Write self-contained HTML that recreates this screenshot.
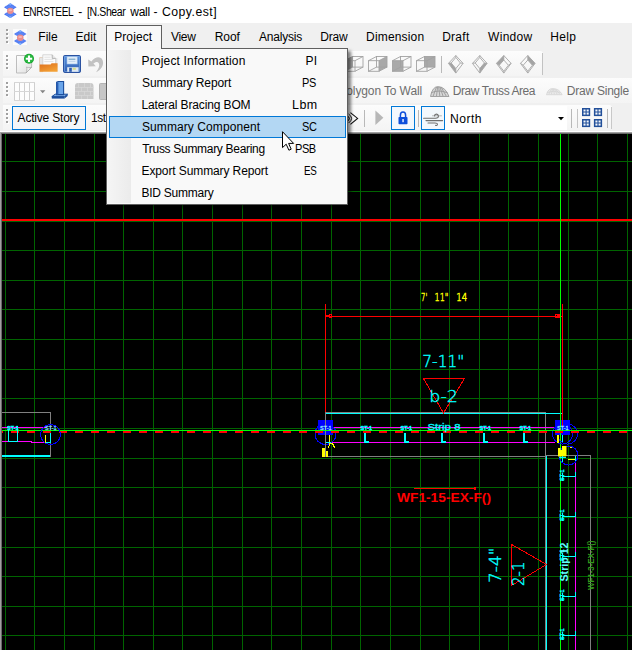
<!DOCTYPE html>
<html lang="en"><head><meta charset="utf-8"><title>ENRSTEEL - [N.Shear wall - Copy.est]</title>
<style>
html,body{margin:0;padding:0;background:#f0f0f0;}
body{width:632px;height:650px;position:relative;overflow:hidden;font-family:"Liberation Sans",sans-serif;font-size:12px;}
.t{position:absolute;white-space:nowrap;line-height:16px;height:16px;}
.b{position:absolute;}
svg{position:absolute;overflow:visible;}
</style></head><body>
<header class="titlebar">
<div class="b" style="left:0px;top:0px;width:632px;height:23px;background:#ffffff;"></div>
<svg style="left:3.7px;top:3.2px" width="12.6" height="15.3" viewBox="0 0 12.6 15.3"><polygon points="6.3,0.31 12.6,4.13 6.3,7.96 0,4.13" fill="#3f6df0"/><polygon points="6.3,0.31 8.1,1.31 6.3,2.31 4.5,1.31" fill="#7db4ff"/><polygon points="6.3,7.34 12.6,11.17 6.3,14.99 0,11.17" fill="#3f6df0"/><polygon points="6.3,14.99 8.1,13.99 6.3,12.99 4.5,13.99" fill="#7db4ff"/><path d="M3.15 2.22 L9.45 6.04 M9.45 2.22 L3.15 6.04 M1.58 3.17 L7.88 7.00 M4.72 1.26 L11.02 5.09 M11.02 3.17 L4.72 7.00 M7.88 1.26 L1.58 5.09" stroke="#7ea2fa" stroke-width="0.45" fill="none"/><path d="M3.15 9.26 L9.45 13.08 M9.45 9.26 L3.15 13.08 M1.58 10.21 L7.88 14.04 M4.72 8.30 L11.02 12.13 M11.02 10.21 L4.72 14.04 M7.88 8.30 L1.58 12.13" stroke="#7ea2fa" stroke-width="0.45" fill="none"/><ellipse cx="6.3" cy="7.85" rx="3.3" ry="3.2" fill="#ea8d8d"/><ellipse cx="6.3" cy="7.25" rx="2" ry="1" fill="#f5b5b5"/></svg>
<span class="t " style="left:23.06px;top:4.00px;font-size:12px;color:#000;letter-spacing:-0.450px;transform:scaleX(0.8412);transform-origin:0 0;">ENRSTEEL</span>
<span class="t " style="left:78.30px;top:4.00px;font-size:12px;color:#000;">-</span>
<span class="t " style="left:86.63px;top:4.00px;font-size:12px;color:#000;letter-spacing:-0.450px;transform:scaleX(0.8768);transform-origin:0 0;">[N.Shear</span>
<span class="t " style="left:130.30px;top:4.00px;font-size:12px;color:#000;letter-spacing:-0.292px;">wall</span>
<span class="t " style="left:153.50px;top:4.00px;font-size:12px;color:#000;">-</span>
<span class="t " style="left:161.96px;top:4.00px;font-size:12px;color:#000;letter-spacing:0.450px;transform:scaleX(1.0216);transform-origin:0 0;">Copy.est]</span>
</header>
<nav class="menubar">
<div class="b" style="left:0px;top:23px;width:632px;height:27px;background:#f0f0f0;"></div>
<div class="b" style="left:7px;top:30px;width:2px;height:2px;background:#ffffff;"></div>
<div class="b" style="left:6px;top:29px;width:2px;height:2px;background:#a0a0a0;"></div>
<div class="b" style="left:7px;top:34px;width:2px;height:2px;background:#ffffff;"></div>
<div class="b" style="left:6px;top:33px;width:2px;height:2px;background:#a0a0a0;"></div>
<div class="b" style="left:7px;top:38px;width:2px;height:2px;background:#ffffff;"></div>
<div class="b" style="left:6px;top:37px;width:2px;height:2px;background:#a0a0a0;"></div>
<div class="b" style="left:7px;top:42px;width:2px;height:2px;background:#ffffff;"></div>
<div class="b" style="left:6px;top:41px;width:2px;height:2px;background:#a0a0a0;"></div>
<div class="b" style="left:13px;top:29px;width:14px;height:16px;background:#fbfbfb;"></div>
<svg style="left:13.8px;top:29.6px" width="12.5" height="15" viewBox="0 0 12.5 15"><polygon points="6.25,0.30 12.5,4.05 6.25,7.80 0,4.05" fill="#3f6df0"/><polygon points="6.25,0.30 8.05,1.30 6.25,2.30 4.45,1.30" fill="#7db4ff"/><polygon points="6.25,7.20 12.5,10.95 6.25,14.70 0,10.95" fill="#3f6df0"/><polygon points="6.25,14.70 8.05,13.70 6.25,12.70 4.45,13.70" fill="#7db4ff"/><path d="M3.12 2.18 L9.38 5.93 M9.38 2.18 L3.12 5.93 M1.56 3.11 L7.81 6.86 M4.69 1.24 L10.94 4.99 M10.94 3.11 L4.69 6.86 M7.81 1.24 L1.56 4.99" stroke="#7ea2fa" stroke-width="0.45" fill="none"/><path d="M3.12 9.07 L9.38 12.82 M9.38 9.07 L3.12 12.82 M1.56 10.01 L7.81 13.76 M4.69 8.14 L10.94 11.89 M10.94 10.01 L4.69 13.76 M7.81 8.14 L1.56 11.89" stroke="#7ea2fa" stroke-width="0.45" fill="none"/><ellipse cx="6.25" cy="7.70" rx="3.3" ry="3.2" fill="#ea8d8d"/><ellipse cx="6.25" cy="7.10" rx="2" ry="1" fill="#f5b5b5"/></svg>
<div class="b" style="left:106px;top:25px;width:56px;height:25px;background:#f8f8f8;border:1px solid #5f5f5f;border-bottom:none;box-sizing:border-box;"></div>
<span class="t " style="left:38.30px;top:29.00px;font-size:12px;color:#000;letter-spacing:0.017px;">File</span>
<span class="t " style="left:75.50px;top:29.00px;font-size:12px;color:#000;letter-spacing:0.025px;">Edit</span>
<span class="t " style="left:114.20px;top:29.00px;font-size:12px;color:#000;letter-spacing:0.092px;">Project</span>
<span class="t " style="left:171.00px;top:29.00px;font-size:12px;color:#000;letter-spacing:-0.292px;">View</span>
<span class="t " style="left:214.70px;top:29.00px;font-size:12px;color:#000;letter-spacing:-0.058px;">Roof</span>
<span class="t " style="left:259.10px;top:29.00px;font-size:12px;color:#000;letter-spacing:-0.236px;">Analysis</span>
<span class="t " style="left:320.30px;top:29.00px;font-size:12px;color:#000;letter-spacing:-0.208px;">Draw</span>
<span class="t " style="left:366.10px;top:29.00px;font-size:12px;color:#000;letter-spacing:0.166px;">Dimension</span>
<span class="t " style="left:442.20px;top:29.00px;font-size:12px;color:#000;letter-spacing:0.256px;">Draft</span>
<span class="t " style="left:488.10px;top:29.00px;font-size:12px;color:#000;letter-spacing:0.270px;">Window</span>
<span class="t " style="left:550.30px;top:29.00px;font-size:12px;color:#000;letter-spacing:0.283px;">Help</span>
</nav>
<section class="toolbars">
<div class="b" style="left:3px;top:51px;width:540px;height:25px;background:linear-gradient(#fcfcfc,#f4f4f4);border-radius:0 3px 3px 0;"></div>
<div class="b" style="left:542px;top:53px;width:1px;height:22px;background:#c2c2c2;"></div>
<div class="b" style="left:3px;top:78px;width:629px;height:25px;background:linear-gradient(#fcfcfc,#f4f4f4);"></div>
<div class="b" style="left:3px;top:105px;width:609px;height:25px;background:linear-gradient(#fcfcfc,#f4f4f4);border-radius:0 3px 3px 0;"></div>
<div class="b" style="left:611px;top:107px;width:1px;height:22px;background:#c8c8c8;"></div>
<div class="b" style="left:7px;top:56px;width:2px;height:2px;background:#ffffff;"></div>
<div class="b" style="left:6px;top:55px;width:2px;height:2px;background:#a0a0a0;"></div>
<div class="b" style="left:7px;top:60px;width:2px;height:2px;background:#ffffff;"></div>
<div class="b" style="left:6px;top:59px;width:2px;height:2px;background:#a0a0a0;"></div>
<div class="b" style="left:7px;top:64px;width:2px;height:2px;background:#ffffff;"></div>
<div class="b" style="left:6px;top:63px;width:2px;height:2px;background:#a0a0a0;"></div>
<div class="b" style="left:7px;top:68px;width:2px;height:2px;background:#ffffff;"></div>
<div class="b" style="left:6px;top:67px;width:2px;height:2px;background:#a0a0a0;"></div>
<div class="b" style="left:7px;top:83px;width:2px;height:2px;background:#ffffff;"></div>
<div class="b" style="left:6px;top:82px;width:2px;height:2px;background:#a0a0a0;"></div>
<div class="b" style="left:7px;top:87px;width:2px;height:2px;background:#ffffff;"></div>
<div class="b" style="left:6px;top:86px;width:2px;height:2px;background:#a0a0a0;"></div>
<div class="b" style="left:7px;top:91px;width:2px;height:2px;background:#ffffff;"></div>
<div class="b" style="left:6px;top:90px;width:2px;height:2px;background:#a0a0a0;"></div>
<div class="b" style="left:7px;top:95px;width:2px;height:2px;background:#ffffff;"></div>
<div class="b" style="left:6px;top:94px;width:2px;height:2px;background:#a0a0a0;"></div>
<div class="b" style="left:7px;top:110px;width:2px;height:2px;background:#ffffff;"></div>
<div class="b" style="left:6px;top:109px;width:2px;height:2px;background:#a0a0a0;"></div>
<div class="b" style="left:7px;top:114px;width:2px;height:2px;background:#ffffff;"></div>
<div class="b" style="left:6px;top:113px;width:2px;height:2px;background:#a0a0a0;"></div>
<div class="b" style="left:7px;top:118px;width:2px;height:2px;background:#ffffff;"></div>
<div class="b" style="left:6px;top:117px;width:2px;height:2px;background:#a0a0a0;"></div>
<div class="b" style="left:7px;top:122px;width:2px;height:2px;background:#ffffff;"></div>
<div class="b" style="left:6px;top:121px;width:2px;height:2px;background:#a0a0a0;"></div>
<svg style="left:15px;top:54px" width="20" height="20" viewBox="0 0 20 20" >
<defs><linearGradient id="pg" x1="0" y1="0" x2="1" y2="1"><stop offset="0" stop-color="#ffffff"/><stop offset="1" stop-color="#dedede"/></linearGradient></defs>
<path d="M1.5 1.5 H16.6 V13.4 L11 19 H1.5 Z" fill="url(#pg)" stroke="#bdbdbd" stroke-width="1"/>
<path d="M16.6 13.2 C14.5 14.2 12.8 13.6 11.6 13 C12.2 15 12 17 11 19 Z" fill="#f6f6f6" stroke="#a9a9a9" stroke-width="0.8"/>
<circle cx="14" cy="4.8" r="5" fill="#1aa32f"/>
<circle cx="14" cy="4.8" r="4.3" fill="#27b83f"/>
<path d="M14 1.6 V8 M10.8 4.8 H17.2" stroke="#fff" stroke-width="2.1"/>
</svg>
<svg style="left:39px;top:54px" width="20" height="19" viewBox="0 0 20 19" >
<defs><linearGradient id="fo" x1="0" y1="0" x2="0.6" y2="1"><stop offset="0" stop-color="#de6f1d"/><stop offset="1" stop-color="#f3a136"/></linearGradient></defs>
<path d="M0.6 3.6 H4 V17.6 H0.6 Z" fill="#e9e4de" stroke="#d9b08a" stroke-width="0.5"/>
<path d="M1 4 H18.4 V17 H1 Z" fill="#e6e6e6"/>
<path d="M3.8 0.8 H13.2 L16.6 4.4 V12 H3.8 Z" fill="#fcfcfc" stroke="#cdcdcd" stroke-width="0.8"/>
<path d="M13.2 0.8 V4.4 H16.6" fill="#e9e9e9" stroke="#9a9a9a" stroke-width="0.7"/>
<path d="M5.4 3.2 H11.6 M5.4 5.4 H14.4 M5.4 7.6 H14.4" stroke="#dedede" stroke-width="0.9"/>
<path d="M0.7 10.4 L11.6 10.4 L12.6 9.2 H18.6 V17.8 H0.7 Z" fill="url(#fo)"/>
</svg>
<svg style="left:63px;top:55px" width="18" height="18" viewBox="0 0 18 18" >
<defs><linearGradient id="fl" x1="0" y1="0" x2="0" y2="1"><stop offset="0" stop-color="#5b93de"/><stop offset="1" stop-color="#2f5db0"/></linearGradient></defs>
<rect x="0.5" y="0.5" width="17" height="17" rx="1.2" fill="url(#fl)" stroke="#2b52a0"/>
<rect x="1.5" y="1.5" width="15" height="15" rx="0.6" fill="none" stroke="#7fb0ea" stroke-width="0.7" opacity="0.8"/>
<rect x="4" y="1.8" width="10.2" height="7.2" fill="#e6f0fa" stroke="#9fc0e6" stroke-width="0.6"/>
<path d="M5.6 4.2 H12.4" stroke="#3f83b0" stroke-width="0.8"/><path d="M5.6 6.4 H12.4" stroke="#b7cde6" stroke-width="0.8"/>
<rect x="4.2" y="12.2" width="11.4" height="4.6" fill="#dfe9f3"/>
<rect x="6.2" y="12.8" width="2.6" height="4" fill="#2f5caf"/>
<rect x="9.6" y="12.8" width="3.2" height="2" fill="#d5dd8a"/>
</svg>
<svg style="left:87px;top:55px" width="18" height="19" viewBox="0 0 18 19" >
<path d="M1.2 4.4 L1.4 11.6 L8.8 11.2 L6.4 8.6 C8.4 6.8 10.8 6.4 11.8 8.2 C13 10.4 11.6 14 9 17.2 C14.4 14.6 17.4 9.6 15.6 5.2 C13.8 1 8.4 1.4 4.4 6.4 Z" fill="#c2c2c2"/>
</svg>
<svg style="left:14px;top:82px" width="21" height="19" viewBox="0 0 21 19" ><rect x="0" y="0" width="21" height="19" fill="#fdfdfd"/><rect x="0" y="0" width="1" height="19" fill="#cfcfcf"/><rect x="5" y="0" width="1" height="19" fill="#cfcfcf"/><rect x="10" y="0" width="1" height="19" fill="#cfcfcf"/><rect x="15" y="0" width="1" height="19" fill="#cfcfcf"/><rect x="20" y="0" width="1" height="19" fill="#cfcfcf"/><rect x="0" y="0" width="21" height="1" fill="#d6d6d6"/><rect x="0" y="9" width="21" height="1" fill="#d6d6d6"/><rect x="0" y="18" width="21" height="1" fill="#d6d6d6"/></svg>
<svg style="left:40px;top:90px" width="6" height="4" viewBox="0 0 6 4" ><path d="M0 0.3 H5.4 L2.7 3.2 Z" fill="#858585"/></svg>
<svg style="left:51px;top:81px" width="18" height="19" viewBox="0 0 18 19" >
<path d="M0.8 15.6 L4.2 13.2 H16.6 L13.6 15.6 Z" fill="#7fb0ea" stroke="#1b4d9c" stroke-width="1"/>
<path d="M0.8 15.6 H13.6 V17.6 H0.8 Z" fill="#1b4d9c"/>
<path d="M13.6 15.6 L16.6 13.2 V15 L13.6 17.6 Z" fill="#1b4d9c"/>
<path d="M5.6 1.2 L7.2 0.5 H12.6 V13.6 H5.6 Z" fill="#6aa5ea" stroke="#1b4d9c" stroke-width="1.1"/>
<path d="M5.6 1.4 H7.4 V13.6 H5.6Z" fill="#2a5fb4"/>
</svg>
<svg style="left:75px;top:82.5px" width="19" height="16" viewBox="0 0 19 16" ><path d="M0 3 Q0 0 3 0 H15.5 Q18.5 0 18.5 3 V16 H0 Z" fill="#c9c9c9"/><rect x="0" y="4" width="18.5" height="0.7" fill="#d9d9d9"/><rect x="0" y="8" width="18.5" height="0.7" fill="#d9d9d9"/><rect x="0" y="12" width="18.5" height="0.7" fill="#d9d9d9"/><rect x="3" y="0" width="0.7" height="4" fill="#d9d9d9"/><rect x="9" y="0" width="0.7" height="4" fill="#d9d9d9"/><rect x="15" y="0" width="0.7" height="4" fill="#d9d9d9"/><rect x="6" y="4" width="0.7" height="4" fill="#d9d9d9"/><rect x="12" y="4" width="0.7" height="4" fill="#d9d9d9"/><rect x="3" y="8" width="0.7" height="4" fill="#d9d9d9"/><rect x="9" y="8" width="0.7" height="4" fill="#d9d9d9"/><rect x="15" y="8" width="0.7" height="4" fill="#d9d9d9"/><rect x="6" y="12" width="0.7" height="4" fill="#d9d9d9"/><rect x="12" y="12" width="0.7" height="4" fill="#d9d9d9"/></svg>
<svg style="left:99px;top:82.5px" width="8" height="17" viewBox="0 0 8 17" ><rect x="0.5" y="0.5" width="10" height="16" rx="1" fill="#c6c6c6" stroke="#b4b4b4"/></svg>
<svg style="left:344px;top:55.6px" width="19.5" height="15.8" viewBox="0 0 19.5 15.8" ><polygon points="0.5,4.7 8.5,0.5 8.5,11.1 0.5,15.3" fill="#a9a9a9"/><g fill="none" stroke="#a2a2a2" stroke-width="0.9"><rect x="0.5" y="4.7" width="10.5" height="10.600000000000001"/><rect x="8.5" y="0.5" width="10.5" height="10.6"/><path d="M0.5 4.7 L8.5 0.5 M11.0 4.7 L19.0 0.5 M0.5 15.3 L8.5 11.1 M11.0 15.3 L19.0 11.1"/></g></svg>
<svg style="left:368.3px;top:55.6px" width="19.5" height="15.8" viewBox="0 0 19.5 15.8" ><polygon points="11.0,4.7 19.0,0.5 19.0,11.1 11.0,15.3" fill="#a9a9a9"/><g fill="none" stroke="#a2a2a2" stroke-width="0.9"><rect x="0.5" y="4.7" width="10.5" height="10.600000000000001"/><rect x="8.5" y="0.5" width="10.5" height="10.6"/><path d="M0.5 4.7 L8.5 0.5 M11.0 4.7 L19.0 0.5 M0.5 15.3 L8.5 11.1 M11.0 15.3 L19.0 11.1"/></g></svg>
<svg style="left:392.3px;top:55.6px" width="19.5" height="15.8" viewBox="0 0 19.5 15.8" ><polygon points="0.5,4.7 11.0,4.7 11.0,15.3 0.5,15.3" fill="#a9a9a9"/><g fill="none" stroke="#a2a2a2" stroke-width="0.9"><rect x="0.5" y="4.7" width="10.5" height="10.600000000000001"/><rect x="8.5" y="0.5" width="10.5" height="10.6"/><path d="M0.5 4.7 L8.5 0.5 M11.0 4.7 L19.0 0.5 M0.5 15.3 L8.5 11.1 M11.0 15.3 L19.0 11.1"/></g></svg>
<svg style="left:416.2px;top:55.6px" width="19.5" height="15.8" viewBox="0 0 19.5 15.8" ><polygon points="8.5,0.5 19.0,0.5 19.0,11.1 8.5,11.1" fill="#a9a9a9"/><g fill="none" stroke="#a2a2a2" stroke-width="0.9"><rect x="0.5" y="4.7" width="10.5" height="10.600000000000001"/><rect x="8.5" y="0.5" width="10.5" height="10.6"/><path d="M0.5 4.7 L8.5 0.5 M11.0 4.7 L19.0 0.5 M0.5 15.3 L8.5 11.1 M11.0 15.3 L19.0 11.1"/></g></svg>
<div class="b" style="left:441px;top:56px;width:1px;height:17px;background:#b9b9b9;"></div>
<svg style="left:448.2px;top:54.6px" width="15.6" height="18.6" viewBox="0 0 15.6 18.6" ><polygon points="0.50,8.37 3.20,8.00 7.80,13.58 7.80,18.10" fill="#a4a4a4"/><g fill="none" stroke="#a6a6a6" stroke-width="0.9"><polygon points="7.80,0.50 15.10,8.37 7.80,18.10 0.50,8.37"/><polygon points="7.80,2.42 12.40,8.00 7.80,13.58 3.20,8.00"/><path d="M7.8 0.5 L7.8 2.418 M15.1 8.370000000000001 L12.399999999999999 7.998 M7.8 18.1 L7.8 13.578000000000001 M0.5 8.370000000000001 L3.2 7.998"/></g></svg>
<svg style="left:472.2px;top:54.6px" width="15.6" height="18.6" viewBox="0 0 15.6 18.6" ><polygon points="15.10,8.37 12.40,8.00 7.80,13.58 7.80,18.10" fill="#a4a4a4"/><g fill="none" stroke="#a6a6a6" stroke-width="0.9"><polygon points="7.80,0.50 15.10,8.37 7.80,18.10 0.50,8.37"/><polygon points="7.80,2.42 12.40,8.00 7.80,13.58 3.20,8.00"/><path d="M7.8 0.5 L7.8 2.418 M15.1 8.370000000000001 L12.399999999999999 7.998 M7.8 18.1 L7.8 13.578000000000001 M0.5 8.370000000000001 L3.2 7.998"/></g></svg>
<svg style="left:496.4px;top:54.6px" width="15.6" height="18.6" viewBox="0 0 15.6 18.6" ><polygon points="7.80,0.50 0.50,8.37 3.20,10.23 7.80,5.02" fill="#a4a4a4"/><g fill="none" stroke="#a6a6a6" stroke-width="0.9"><polygon points="7.80,0.50 15.10,8.37 7.80,18.10 0.50,8.37"/><polygon points="7.80,5.02 12.40,10.23 7.80,16.18 3.20,10.23"/><path d="M7.8 0.5 L7.8 5.022000000000001 M15.1 8.370000000000001 L12.399999999999999 10.230000000000002 M7.8 18.1 L7.8 16.182000000000002 M0.5 8.370000000000001 L3.2 10.230000000000002"/></g></svg>
<svg style="left:520.3px;top:54.6px" width="15.6" height="18.6" viewBox="0 0 15.6 18.6" ><polygon points="7.80,0.50 15.10,8.37 12.40,10.23 7.80,5.02" fill="#a4a4a4"/><g fill="none" stroke="#a6a6a6" stroke-width="0.9"><polygon points="7.80,0.50 15.10,8.37 7.80,18.10 0.50,8.37"/><polygon points="7.80,5.02 12.40,10.23 7.80,16.18 3.20,10.23"/><path d="M7.8 0.5 L7.8 5.022000000000001 M15.1 8.370000000000001 L12.399999999999999 10.230000000000002 M7.8 18.1 L7.8 16.182000000000002 M0.5 8.370000000000001 L3.2 10.230000000000002"/></g></svg>
<span class="t " style="left:346.30px;top:83.00px;font-size:12px;color:#6d6d6d;letter-spacing:-0.117px;">olygon To Wall</span>
<svg style="left:430.2px;top:86px" width="19.5" height="11" viewBox="0 0 19.5 11" ><g fill="none" stroke="#9a9a9a" stroke-width="0.9" opacity="1"><path d="M0.5 10.5 Q2.34 0.55 8.19 0.6 Q15.600000000000001 1.1 19.0 10.5" fill="#9a9a9a" fill-opacity="0.35"/><path d="M3.2 10 L6.5 1"/><path d="M6.5 10 L7.6 1"/><path d="M9.8 10 L8.7 1"/><path d="M13.0 10 L9.9 1"/><path d="M16.2 10 L11.0 1"/><path d="M1 6.82 Q8.775 3.3 17.5 6.82"/><path d="M0.5 10.5 H19.0"/></g></svg>
<span class="t " style="left:452.80px;top:83.00px;font-size:12px;color:#6d6d6d;letter-spacing:-0.425px;">Draw Truss Area</span>
<svg style="left:546px;top:87.6px" width="16.6" height="7.2" viewBox="0 0 16.6 7.2" ><g fill="none" stroke="#cfcfcf" stroke-width="0.9" opacity="0.8"><path d="M0.5 6.7 Q1.992 0.36000000000000004 6.972 0.6 Q13.280000000000001 0.7200000000000001 16.1 6.7" fill="#cfcfcf" fill-opacity="0.35"/><path d="M2.8 6.2 L5.5 1"/><path d="M5.5 6.2 L6.5 1"/><path d="M8.3 6.2 L7.4 1"/><path d="M11.1 6.2 L8.4 1"/><path d="M13.8 6.2 L9.4 1"/><path d="M1 4.464 Q7.470000000000001 2.16 14.600000000000001 4.464"/><path d="M0.5 6.7 H16.1"/></g></svg>
<span class="t " style="left:566.80px;top:83.00px;font-size:12px;color:#6d6d6d;letter-spacing:-0.233px;">Draw Single</span>
<div class="b" style="left:12px;top:106px;width:74px;height:24px;background:#f4f6f9;border:1px solid #0078d7;box-sizing:border-box;"></div>
<span class="t " style="left:17.60px;top:110.00px;font-size:12px;color:#000;letter-spacing:-0.200px;">Active Story</span>
<span class="t " style="left:90.93px;top:110.00px;font-size:12px;color:#000;letter-spacing:-0.450px;transform:scaleX(0.9929);transform-origin:0 0;">1st</span>
<svg style="left:347px;top:111px" width="12" height="15" viewBox="0 0 12 15" ><g fill="none" stroke="#111" stroke-width="1.1"><path d="M3.4 1.6 L10.6 7.4 L3.4 13.4"/><path d="M0.4 5 Q4.2 7.4 0.4 10.2"/><path d="M1.6 3 Q7.6 7.4 1.6 12" stroke-width="1"/></g></svg>
<div class="b" style="left:364px;top:110px;width:1px;height:17px;background:#b8b8b8;"></div>
<svg style="left:375px;top:109.5px" width="9" height="16" viewBox="0 0 9 16" ><path d="M0.4 0.6 L8.4 7.8 L0.4 15 Z" fill="#b7b7b7"/></svg>
<div class="b" style="left:391px;top:106px;width:24px;height:24px;background:#f3f8fd;border:1px solid #0078d7;box-sizing:border-box;"></div>
<svg style="left:397.5px;top:111px" width="10" height="14" viewBox="0 0 10 14" ><path d="M2.4 6.4 V4.2 Q2.4 1.1 5 1.1 Q7.6 1.1 7.6 4.2 V6.4" fill="none" stroke="#0c4edb" stroke-width="1.5"/><rect x="0.5" y="6" width="9" height="7.3" rx="0.8" fill="#0c4edb"/><rect x="4.3" y="8" width="1.5" height="3.2" fill="#dfe9ff"/></svg>
<div class="b" style="left:418px;top:110px;width:1px;height:17px;background:#b8b8b8;"></div>
<div class="b" style="left:421px;top:106px;width:24px;height:24px;background:#f3f8fd;border:1px solid #0078d7;box-sizing:border-box;"></div>
<svg style="left:423px;top:112.5px" width="21" height="13" viewBox="0 0 21 13" ><g fill="none" stroke="#6f6f6f" stroke-width="1.1" stroke-linecap="round"><path d="M0.6 5.2 H12.5 Q15.6 5.2 15.4 3 Q15 0.8 12.8 1.2 Q11.4 1.6 11.6 3"/><path d="M3 7.6 H19.6"/><path d="M5 10 H12 Q14.6 10 14.4 11.6 Q14 12.8 12.6 12.4"/><path d="M9.5 2.8 H18.5" stroke-width="0.8" opacity="0.6"/></g></svg>
<div class="b" style="left:445px;top:106px;width:122px;height:24px;background:#ffffff;"></div>
<span class="t " style="left:449.79px;top:111.00px;font-size:12px;color:#000;letter-spacing:0.450px;transform:scaleX(1.0102);transform-origin:0 0;">North</span>
<svg style="left:558px;top:117px" width="6" height="4" viewBox="0 0 6 4" ><path d="M0 0 H6 L3 3.2 Z" fill="#000"/></svg>
<div class="b" style="left:571px;top:109px;width:1px;height:19px;background:#b8b8b8;"></div>
<div class="b" style="left:577px;top:109px;width:1px;height:19px;background:#c4c4c4;"></div>
<svg style="left:582px;top:108.3px" width="21" height="20" viewBox="0 0 21 20" ><rect x="0.75" y="0.75" width="6.7" height="6.6" fill="#f4f7fb" stroke="#23509a" stroke-width="1.5"/><path d="M4.1 1 V7.4 M1 4.05 H7.4" stroke="#23509a" stroke-width="1.1"/><rect x="0.75" y="11.75" width="6.7" height="6.6" fill="#f4f7fb" stroke="#23509a" stroke-width="1.5"/><path d="M4.1 12 V18.4 M1 15.05 H7.4" stroke="#23509a" stroke-width="1.1"/><rect x="12.65" y="0.75" width="6.7" height="6.6" fill="#f4f7fb" stroke="#23509a" stroke-width="1.5"/><path d="M16.0 1 V7.4 M12.9 4.05 H19.3" stroke="#23509a" stroke-width="1.1"/><rect x="12.65" y="11.75" width="6.7" height="6.6" fill="#f4f7fb" stroke="#23509a" stroke-width="1.5"/><path d="M16.0 12 V18.4 M12.9 15.05 H19.3" stroke="#23509a" stroke-width="1.1"/></svg>
<div class="b" style="left:607px;top:109px;width:1px;height:19px;background:#b8b8b8;"></div>
<div class="b" style="left:0px;top:131px;width:632px;height:1px;background:#ffffff;"></div>
</section>
<main class="drawing">
<svg class="cv" style="left:0px;top:132px" width="632" height="518" viewBox="0 0 632 518" shape-rendering="crispEdges"><rect x="0" y="0" width="632" height="518" fill="#a0a0a0"/><rect x="1" y="1" width="631" height="517" fill="#696969"/><rect x="2" y="2" width="630" height="516" fill="#000000"/><rect x="5" y="2" width="1" height="516" fill="#006400"/><rect x="34" y="2" width="1" height="516" fill="#006400"/><rect x="64" y="2" width="1" height="516" fill="#006400"/><rect x="94" y="2" width="1" height="516" fill="#006400"/><rect x="123" y="2" width="1" height="516" fill="#006400"/><rect x="153" y="2" width="1" height="516" fill="#006400"/><rect x="182" y="2" width="1" height="516" fill="#006400"/><rect x="212" y="2" width="1" height="516" fill="#006400"/><rect x="242" y="2" width="1" height="516" fill="#006400"/><rect x="271" y="2" width="1" height="516" fill="#006400"/><rect x="301" y="2" width="1" height="516" fill="#006400"/><rect x="331" y="2" width="1" height="516" fill="#006400"/><rect x="360" y="2" width="1" height="516" fill="#006400"/><rect x="390" y="2" width="1" height="516" fill="#006400"/><rect x="420" y="2" width="1" height="516" fill="#006400"/><rect x="449" y="2" width="1" height="516" fill="#006400"/><rect x="479" y="2" width="1" height="516" fill="#006400"/><rect x="508" y="2" width="1" height="516" fill="#006400"/><rect x="538" y="2" width="1" height="516" fill="#006400"/><rect x="568" y="2" width="1" height="516" fill="#006400"/><rect x="597" y="2" width="1" height="516" fill="#006400"/><rect x="627" y="2" width="1" height="516" fill="#006400"/><rect x="2" y="29" width="630" height="1" fill="#006400"/><rect x="2" y="59" width="630" height="1" fill="#006400"/><rect x="2" y="89" width="630" height="1" fill="#006400"/><rect x="2" y="118" width="630" height="1" fill="#006400"/><rect x="2" y="148" width="630" height="1" fill="#006400"/><rect x="2" y="177" width="630" height="1" fill="#006400"/><rect x="2" y="207" width="630" height="1" fill="#006400"/><rect x="2" y="237" width="630" height="1" fill="#006400"/><rect x="2" y="266" width="630" height="1" fill="#006400"/><rect x="2" y="296" width="630" height="1" fill="#006400"/><rect x="2" y="326" width="630" height="1" fill="#006400"/><rect x="2" y="355" width="630" height="1" fill="#006400"/><rect x="2" y="385" width="630" height="1" fill="#006400"/><rect x="2" y="415" width="630" height="1" fill="#006400"/><rect x="2" y="444" width="630" height="1" fill="#006400"/><rect x="2" y="474" width="630" height="1" fill="#006400"/><rect x="2" y="503" width="630" height="1" fill="#006400"/><rect x="2" y="87" width="630" height="2" fill="#ff0000"/><rect x="325" y="280" width="221" height="1" fill="#808080"/><rect x="325" y="280" width="1" height="45" fill="#808080"/><rect x="325" y="324" width="221" height="1" fill="#808080"/><rect x="545" y="280" width="1" height="238" fill="#808080"/><rect x="545" y="323" width="46" height="1" fill="#808080"/><rect x="590" y="323" width="1" height="195" fill="#808080"/><rect x="2" y="280" width="49" height="1" fill="#808080"/><rect x="50" y="280" width="1" height="45" fill="#808080"/><rect x="2" y="323" width="48" height="2" fill="#00ffff"/><rect x="326" y="281" width="236" height="1" fill="#00ffff"/><rect x="332" y="295" width="223" height="1" fill="#ff00ff"/><rect x="330" y="310" width="225" height="1" fill="#ff00ff"/><rect x="2" y="295" width="45" height="1" fill="#ff00ff"/><rect x="2" y="309" width="30" height="1" fill="#ff00ff"/><rect x="31" y="310" width="16" height="1" fill="#ff00ff"/><rect x="575" y="329" width="1" height="189" fill="#ff00ff"/><rect x="546" y="324" width="1" height="194" fill="#00ffff"/><rect x="325" y="172" width="1" height="108" fill="#ff0000"/><rect x="562" y="172" width="1" height="123" fill="#ff0000"/><rect x="325" y="184" width="238" height="1" fill="#ff0000"/><rect x="326" y="183" width="3" height="2" fill="#ff0000"/><rect x="329" y="182" width="3" height="1" fill="#ff0000"/><rect x="329" y="185" width="3" height="1" fill="#ff0000"/><rect x="331" y="182" width="1" height="4" fill="#ff0000"/><rect x="329" y="182" width="1" height="4" fill="#ff0000"/><rect x="555" y="182" width="5" height="1" fill="#ff0000"/><rect x="555" y="185" width="5" height="1" fill="#ff0000"/><rect x="555" y="182" width="1" height="4" fill="#ff0000"/><rect x="557" y="183" width="4" height="2" fill="#ff0000"/><rect x="560" y="2" width="1" height="516" fill="#00ff00"/><rect x="2" y="298" width="630" height="1" fill="#00ff00"/><rect x="2" y="299" width="1" height="2" fill="#ff0000"/><rect x="11" y="299" width="8" height="2" fill="#ff0000"/><rect x="27" y="299" width="8" height="2" fill="#ff0000"/><rect x="43" y="299" width="8" height="2" fill="#ff0000"/><rect x="59" y="299" width="8" height="2" fill="#ff0000"/><rect x="75" y="299" width="8" height="2" fill="#ff0000"/><rect x="91" y="299" width="8" height="2" fill="#ff0000"/><rect x="107" y="299" width="8" height="2" fill="#ff0000"/><rect x="123" y="299" width="8" height="2" fill="#ff0000"/><rect x="139" y="299" width="8" height="2" fill="#ff0000"/><rect x="155" y="299" width="8" height="2" fill="#ff0000"/><rect x="171" y="299" width="8" height="2" fill="#ff0000"/><rect x="187" y="299" width="8" height="2" fill="#ff0000"/><rect x="203" y="299" width="8" height="2" fill="#ff0000"/><rect x="219" y="299" width="8" height="2" fill="#ff0000"/><rect x="235" y="299" width="8" height="2" fill="#ff0000"/><rect x="251" y="299" width="8" height="2" fill="#ff0000"/><rect x="267" y="299" width="8" height="2" fill="#ff0000"/><rect x="283" y="299" width="8" height="2" fill="#ff0000"/><rect x="299" y="299" width="8" height="2" fill="#ff0000"/><rect x="315" y="299" width="8" height="2" fill="#ff0000"/><rect x="331" y="299" width="8" height="2" fill="#ff0000"/><rect x="347" y="299" width="8" height="2" fill="#ff0000"/><rect x="363" y="299" width="8" height="2" fill="#ff0000"/><rect x="379" y="299" width="8" height="2" fill="#ff0000"/><rect x="395" y="299" width="8" height="2" fill="#ff0000"/><rect x="411" y="299" width="8" height="2" fill="#ff0000"/><rect x="427" y="299" width="8" height="2" fill="#ff0000"/><rect x="443" y="299" width="8" height="2" fill="#ff0000"/><rect x="459" y="299" width="8" height="2" fill="#ff0000"/><rect x="475" y="299" width="8" height="2" fill="#ff0000"/><rect x="491" y="299" width="8" height="2" fill="#ff0000"/><rect x="507" y="299" width="8" height="2" fill="#ff0000"/><rect x="523" y="299" width="8" height="2" fill="#ff0000"/><rect x="539" y="299" width="8" height="2" fill="#ff0000"/><rect x="555" y="299" width="8" height="2" fill="#ff0000"/><rect x="571" y="299" width="8" height="2" fill="#ff0000"/><rect x="587" y="299" width="8" height="2" fill="#ff0000"/><rect x="603" y="299" width="8" height="2" fill="#ff0000"/><rect x="619" y="299" width="8" height="2" fill="#ff0000"/><rect x="318" y="288" width="15" height="15" fill="#0000ff"/><rect x="555" y="288" width="15" height="15" fill="#0000ff"/><circle cx="325.5" cy="302" r="10.5" fill="none" stroke="#0000ff" stroke-width="1"/><circle cx="562.5" cy="302" r="10" fill="none" stroke="#0000ff" stroke-width="1"/><circle cx="567.5" cy="302" r="10" fill="none" stroke="#0000ff" stroke-width="1"/><circle cx="568.5" cy="323.5" r="9.5" fill="none" stroke="#0000ff" stroke-width="1"/><circle cx="50.5" cy="302.5" r="10" fill="none" stroke="#0000ff" stroke-width="1"/><rect x="325" y="288" width="1" height="37" fill="#808080"/><rect x="562" y="288" width="1" height="7" fill="#ff0000"/><rect x="560" y="288" width="1" height="21" fill="#00ff00"/><rect x="314" y="298" width="27" height="1" fill="#00ff00"/><rect x="550" y="298" width="33" height="1" fill="#00ff00"/><rect x="315" y="299" width="8" height="2" fill="#ff0000"/><rect x="331" y="299" width="8" height="2" fill="#ff0000"/><rect x="555" y="299" width="8" height="2" fill="#ff0000"/><rect x="571" y="299" width="8" height="2" fill="#ff0000"/><rect x="43" y="299" width="8" height="2" fill="#ff0000"/><rect x="364" y="301" width="2" height="10" fill="#00ffff"/><rect x="366" y="309" width="3" height="2" fill="#00ffff"/><text x="360.5" y="298.3" font-size="6.2" fill="#00ffff" font-family='"Liberation Sans",sans-serif' font-weight="normal" text-anchor="start" textLength="11.5" lengthAdjust="spacingAndGlyphs" stroke="#00ffff" stroke-width="0.5">ST-1</text><rect x="404" y="301" width="2" height="10" fill="#00ffff"/><rect x="406" y="309" width="3" height="2" fill="#00ffff"/><text x="400.5" y="298.3" font-size="6.2" fill="#00ffff" font-family='"Liberation Sans",sans-serif' font-weight="normal" text-anchor="start" textLength="11.5" lengthAdjust="spacingAndGlyphs" stroke="#00ffff" stroke-width="0.5">ST-1</text><rect x="483" y="301" width="2" height="10" fill="#00ffff"/><rect x="485" y="309" width="3" height="2" fill="#00ffff"/><text x="479.5" y="298.3" font-size="6.2" fill="#00ffff" font-family='"Liberation Sans",sans-serif' font-weight="normal" text-anchor="start" textLength="11.5" lengthAdjust="spacingAndGlyphs" stroke="#00ffff" stroke-width="0.5">ST-1</text><rect x="523" y="301" width="2" height="10" fill="#00ffff"/><rect x="525" y="309" width="3" height="2" fill="#00ffff"/><text x="519.5" y="298.3" font-size="6.2" fill="#00ffff" font-family='"Liberation Sans",sans-serif' font-weight="normal" text-anchor="start" textLength="11.5" lengthAdjust="spacingAndGlyphs" stroke="#00ffff" stroke-width="0.5">ST-1</text><rect x="441" y="301" width="2" height="10" fill="#00ffff"/><rect x="443" y="309" width="3" height="2" fill="#00ffff"/><text x="427.5" y="298" font-size="9.5" fill="#00ffff" font-family='"Liberation Sans",sans-serif' font-weight="normal" text-anchor="start" textLength="33" lengthAdjust="spacingAndGlyphs" stroke="#00ffff" stroke-width="0.3">Strip 8</text><text x="320" y="298.3" font-size="6" fill="#8fe4ff" font-family='"Liberation Sans",sans-serif' font-weight="normal" text-anchor="start" textLength="11.5" lengthAdjust="spacingAndGlyphs" stroke="#8fe4ff" stroke-width="0.3">ST-1</text><text x="557" y="298.3" font-size="6" fill="#8fe4ff" font-family='"Liberation Sans",sans-serif' font-weight="normal" text-anchor="start" textLength="11.5" lengthAdjust="spacingAndGlyphs" stroke="#8fe4ff" stroke-width="0.3">ST-1</text><rect x="8" y="297" width="1" height="13" fill="#00ffff"/><rect x="17" y="294" width="1" height="16" fill="#00ffff"/><rect x="8" y="309" width="10" height="1" fill="#00ffff"/><text x="7" y="298.3" font-size="6.2" fill="#00ffff" font-family='"Liberation Sans",sans-serif' font-weight="normal" text-anchor="start" textLength="11.5" lengthAdjust="spacingAndGlyphs" stroke="#00ffff" stroke-width="0.5">ST-1</text><text x="45" y="298.3" font-size="6" fill="#7fd0ff" font-family='"Liberation Sans",sans-serif' font-weight="normal" text-anchor="start" textLength="11.5" lengthAdjust="spacingAndGlyphs" stroke="#7fd0ff" stroke-width="0.3">ST-1</text><rect x="45" y="303" width="1" height="8" fill="#ffff00"/><rect x="50" y="301" width="1" height="10" fill="#00ffff"/><rect x="46" y="310" width="5" height="1" fill="#00ffff"/><rect x="562" y="344" width="14" height="1" fill="#00ffff"/><rect x="575" y="340" width="1" height="5" fill="#00ffff"/><rect x="562" y="341" width="1" height="8" fill="#00ffff"/><text x="563.5" y="349" font-size="6.2" fill="#00ffff" font-family='"Liberation Sans",sans-serif' font-weight="normal" text-anchor="start" textLength="11.5" lengthAdjust="spacingAndGlyphs" transform="rotate(-90 563.5 349)" stroke="#00ffff" stroke-width="0.5">ST-1</text><rect x="562" y="384" width="14" height="1" fill="#00ffff"/><rect x="575" y="380" width="1" height="5" fill="#00ffff"/><rect x="562" y="381" width="1" height="8" fill="#00ffff"/><text x="563.5" y="389" font-size="6.2" fill="#00ffff" font-family='"Liberation Sans",sans-serif' font-weight="normal" text-anchor="start" textLength="11.5" lengthAdjust="spacingAndGlyphs" transform="rotate(-90 563.5 389)" stroke="#00ffff" stroke-width="0.5">ST-1</text><rect x="562" y="424" width="14" height="1" fill="#00ffff"/><rect x="575" y="420" width="1" height="5" fill="#00ffff"/><rect x="562" y="421" width="1" height="8" fill="#00ffff"/><text x="563.5" y="429" font-size="6.2" fill="#00ffff" font-family='"Liberation Sans",sans-serif' font-weight="normal" text-anchor="start" textLength="11.5" lengthAdjust="spacingAndGlyphs" transform="rotate(-90 563.5 429)" stroke="#00ffff" stroke-width="0.5">ST-1</text><rect x="562" y="464" width="14" height="1" fill="#00ffff"/><rect x="575" y="460" width="1" height="5" fill="#00ffff"/><rect x="562" y="461" width="1" height="8" fill="#00ffff"/><text x="563.5" y="469" font-size="6.2" fill="#00ffff" font-family='"Liberation Sans",sans-serif' font-weight="normal" text-anchor="start" textLength="11.5" lengthAdjust="spacingAndGlyphs" transform="rotate(-90 563.5 469)" stroke="#00ffff" stroke-width="0.5">ST-1</text><rect x="562" y="503" width="14" height="1" fill="#00ffff"/><rect x="575" y="499" width="1" height="5" fill="#00ffff"/><rect x="562" y="500" width="1" height="8" fill="#00ffff"/><text x="563.5" y="508" font-size="6.2" fill="#00ffff" font-family='"Liberation Sans",sans-serif' font-weight="normal" text-anchor="start" textLength="11.5" lengthAdjust="spacingAndGlyphs" transform="rotate(-90 563.5 508)" stroke="#00ffff" stroke-width="0.5">ST-1</text><text x="567.5" y="449.5" font-size="10" fill="#5cffff" font-family='"Liberation Sans",sans-serif' font-weight="bold" text-anchor="start" textLength="39" lengthAdjust="spacingAndGlyphs" transform="rotate(-90 567.5 449.5)">Strip 12</text><text x="593.5" y="458" font-size="9" fill="#33991c" font-family='"Liberation Sans",sans-serif' font-weight="bold" text-anchor="start" textLength="49.5" lengthAdjust="spacingAndGlyphs" transform="rotate(-90 593.5 458)">WF1-3-EX-F()</text><rect x="322" y="316" width="3" height="9" fill="#ffff00"/><rect x="326" y="319" width="2" height="6" fill="#ffff00"/><rect x="329" y="303" width="1" height="9" fill="#ffff00"/><path d="M328.5 316 Q329 311.5 331.5 311.5 Q333.5 312 334.5 316" fill="none" stroke="#ffff00" stroke-width="1"/><rect x="326" y="310" width="5" height="1" fill="#00ffff"/><rect x="557" y="303" width="2" height="8" fill="#ffff00"/><rect x="562" y="303" width="1" height="7" fill="#00ffff"/><polygon points="558,316 560,316 560,318 562,318 562,314 566,314 566,324 558,324" fill="#ffff00" stroke="#ffff00" stroke-width="0.5"/><rect x="570" y="315" width="2" height="1" fill="#ffff00"/><rect x="568" y="327" width="7" height="1" fill="#ffff00"/><rect x="575" y="324" width="1" height="5" fill="#00ffff"/><rect x="559" y="325" width="7" height="1" fill="#00ffff"/><rect x="562" y="324" width="1" height="6" fill="#00ffff"/><polygon points="423.5,246.5 464.5,246.5 443.5,281" fill="none" stroke="#ff0000" stroke-width="1"/><text x="422.3" y="235" font-size="15.5" fill="#00ffff" font-family='"DejaVu Sans Light","DejaVu Sans","Liberation Sans",sans-serif' font-weight="normal" text-anchor="start" textLength="42" lengthAdjust="spacingAndGlyphs" stroke="#00ffff" stroke-width="0.4">7-11&quot;</text><text x="429.3" y="270.3" font-size="16.5" fill="#00ffff" font-family='"DejaVu Sans Light","DejaVu Sans","Liberation Sans",sans-serif' font-weight="normal" text-anchor="start" textLength="28.5" lengthAdjust="spacingAndGlyphs" stroke="#00ffff" stroke-width="0.4">b-2</text><polygon points="511.5,412.5 511.5,453.5 546.5,432.5" fill="none" stroke="#ff0000" stroke-width="1"/><text x="500.8" y="451" font-size="16" fill="#00ffff" font-family='"DejaVu Sans Light","DejaVu Sans","Liberation Sans",sans-serif' font-weight="normal" text-anchor="start" textLength="35.5" lengthAdjust="spacingAndGlyphs" transform="rotate(-90 500.8 451)" stroke="#00ffff" stroke-width="0.4">7-4&quot;</text><text x="524.3" y="454" font-size="16" fill="#00ffff" font-family='"DejaVu Sans Light","DejaVu Sans","Liberation Sans",sans-serif' font-weight="normal" text-anchor="start" textLength="24.5" lengthAdjust="spacingAndGlyphs" transform="rotate(-90 524.3 454)" stroke="#00ffff" stroke-width="0.4">2-1</text><text x="421" y="169" font-size="10" fill="#ffff00" font-family='"DejaVu Sans Light","DejaVu Sans","Liberation Sans",sans-serif' font-weight="normal" text-anchor="start" textLength="6.3" lengthAdjust="spacingAndGlyphs" stroke="#ffff00" stroke-width="0.45">7'</text><text x="434.5" y="169" font-size="10" fill="#ffff00" font-family='"DejaVu Sans Light","DejaVu Sans","Liberation Sans",sans-serif' font-weight="normal" text-anchor="start" textLength="14" lengthAdjust="spacingAndGlyphs" stroke="#ffff00" stroke-width="0.45">11&quot;</text><text x="456.3" y="169" font-size="10" fill="#ffff00" font-family='"DejaVu Sans Light","DejaVu Sans","Liberation Sans",sans-serif' font-weight="normal" text-anchor="start" textLength="11" lengthAdjust="spacingAndGlyphs" stroke="#ffff00" stroke-width="0.45">14</text><rect x="414" y="356" width="62" height="1" fill="#ff0000"/><text x="397" y="370.3" font-size="13.4" fill="#ff0000" font-family='"Liberation Sans",sans-serif' font-weight="bold" text-anchor="start" textLength="94" lengthAdjust="spacingAndGlyphs">WF1-15-EX-F()</text><rect x="474" y="355" width="2" height="3" fill="#ff0000"/></svg>
</main>
<div class="dropdown" role="menu">
<div class="b" style="left:106px;top:48px;width:242px;height:157px;background:#f9f9f9;border:1px solid #5f5f5f;box-sizing:border-box;box-shadow:3px 3px 3px rgba(0,0,0,0.5);"></div>
<div class="b" style="left:107px;top:48px;width:54px;height:2px;background:#f8f8f8;"></div>
<div class="b" style="left:108px;top:50px;width:23px;height:153px;background:linear-gradient(90deg,#f5f5f5,#ebebeb);"></div>
<div class="b" style="left:109px;top:116px;width:237px;height:22px;background:#b3d7f3;border:1px solid #0078d7;box-sizing:border-box;"></div>
<span class="t " style="left:141.50px;top:53.00px;font-size:12px;color:#000;letter-spacing:0.174px;">Project Information</span>
<span class="t " style="left:305.40px;top:53.00px;font-size:12px;color:#000;letter-spacing:0.350px;">PI</span>
<span class="t " style="left:142.00px;top:75.00px;font-size:12px;color:#000;letter-spacing:-0.110px;">Summary Report</span>
<span class="t " style="left:302.29px;top:75.00px;font-size:12px;color:#000;letter-spacing:-0.450px;transform:scaleX(0.9110);transform-origin:0 0;">PS</span>
<span class="t " style="left:141.50px;top:97.00px;font-size:12px;color:#000;letter-spacing:-0.126px;">Lateral Bracing BOM</span>
<span class="t " style="left:291.56px;top:97.00px;font-size:12px;color:#000;letter-spacing:0.450px;transform:scaleX(1.0388);transform-origin:0 0;">Lbm</span>
<span class="t " style="left:142.00px;top:119.00px;font-size:12px;color:#000;letter-spacing:0.080px;">Summary Component</span>
<span class="t " style="left:301.54px;top:119.00px;font-size:12px;color:#000;letter-spacing:-0.450px;transform:scaleX(0.9150);transform-origin:0 0;">SC</span>
<span class="t " style="left:142.25px;top:141.00px;font-size:12px;color:#000;letter-spacing:-0.304px;">Truss Summary Bearing</span>
<span class="t " style="left:295.38px;top:141.00px;font-size:12px;color:#000;letter-spacing:-0.450px;transform:scaleX(0.9173);transform-origin:0 0;">PSB</span>
<span class="t " style="left:141.50px;top:163.00px;font-size:12px;color:#000;letter-spacing:-0.106px;">Export Summary Report</span>
<span class="t " style="left:303.68px;top:163.00px;font-size:12px;color:#000;letter-spacing:-0.450px;transform:scaleX(0.8185);transform-origin:0 0;">ES</span>
<span class="t " style="left:141.50px;top:185.00px;font-size:12px;color:#000;letter-spacing:-0.253px;">BID Summary</span>
</div>
<svg style="left:282px;top:131px" width="13" height="20" viewBox="0 0 13 20" ><path d="M0.5 0.7 V16.6 L4.2 13.2 L6.9 19.2 L9.2 18.2 L6.6 12.4 H11.6 Z" fill="#fff" stroke="#000" stroke-width="1" stroke-linejoin="miter"/></svg>
</body></html>
